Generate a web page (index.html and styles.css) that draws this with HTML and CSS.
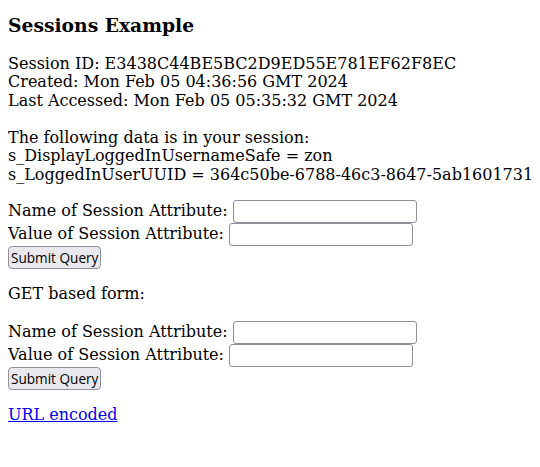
FILE: index.html
```html
<!DOCTYPE html>
<html>
<head>
<meta charset="utf-8">
<title>Sessions Example</title>
<link rel="stylesheet" href="styles.css">
</head>
<body class="page">
<h3 class="title">Sessions Example</h3>
<div class="lines">
Session ID: E3438C44BE5BC2D9ED55E781EF62F8EC<br>
Created: Mon Feb 05 04:36:56 GMT 2024<br>
Last Accessed: Mon Feb 05 05:35:32 GMT 2024
</div>
<p class="para para-data">
The following data is in your session:<br>
s_DisplayLoggedInUsernameSafe = zon<br>
<span class="nowrap">s_LoggedInUserUUID = 364c50be-6788-46c3-8647-5ab1601731d2</span>
</p>
<form class="form" action="#" method="POST">
Name of Session Attribute:
<input class="field" type="text" name="dataname">
<br>
Value of Session Attribute:
<input class="field" type="text" name="datavalue">
<br>
<input class="btn" type="submit" value="Submit Query">
</form>
<p class="para para-get">GET based form:</p>
<form class="form" action="#" method="GET">
Name of Session Attribute:
<input class="field" type="text" name="dataname">
<br>
Value of Session Attribute:
<input class="field" type="text" name="datavalue">
<br>
<input class="btn" type="submit" value="Submit Query">
</form>
<p class="para para-link"><a class="link" href="#">URL encoded</a></p>
</body>
</html>
```

FILE: styles.css
```css
html, body {
  overflow: hidden;
}
.page {
  margin: 8px;
  font-family: "DejaVu Serif", serif;
  font-size: 16px;
  line-height: 18.6px;
  color: #000;
  background: #fff;
}
.title {
  font-size: 18.72px;
  line-height: 22px;
  font-weight: bold;
  margin: 6px 0 18.72px 0;
}
.lines {
  margin: 0;
}
.para {
  margin: 16px 0;
}
.para-data {
  margin-top: 18px;
}
.para-get {
  margin-bottom: 17px;
}
.para-link {
  margin-top: 14px;
}
.nowrap {
  white-space: nowrap;
}
.form {
  margin: 0 0 16px 0;
}
.field {
  box-sizing: border-box;
  width: 184px;
  height: 23px;
  margin: 0;
  padding: 1px 4px;
  border: 1px solid #8f8f9d;
  border-radius: 3px;
  background: #fff;
  font-family: "DejaVu Sans", sans-serif;
  font-size: 13.33px;
  vertical-align: baseline;
}
.btn {
  box-sizing: border-box;
  height: 23px;
  margin: 0;
  padding: 0 2px;
  border: 1px solid #8f8f9d;
  border-radius: 4px;
  background: #e9e9ed;
  color: #000;
  font-family: "Open Sans", sans-serif;
  font-size: 13.6px;
}
.form-get {
  margin-top: 0;
}
.link {
  color: #0000ee;
  text-decoration: underline;
}
```
